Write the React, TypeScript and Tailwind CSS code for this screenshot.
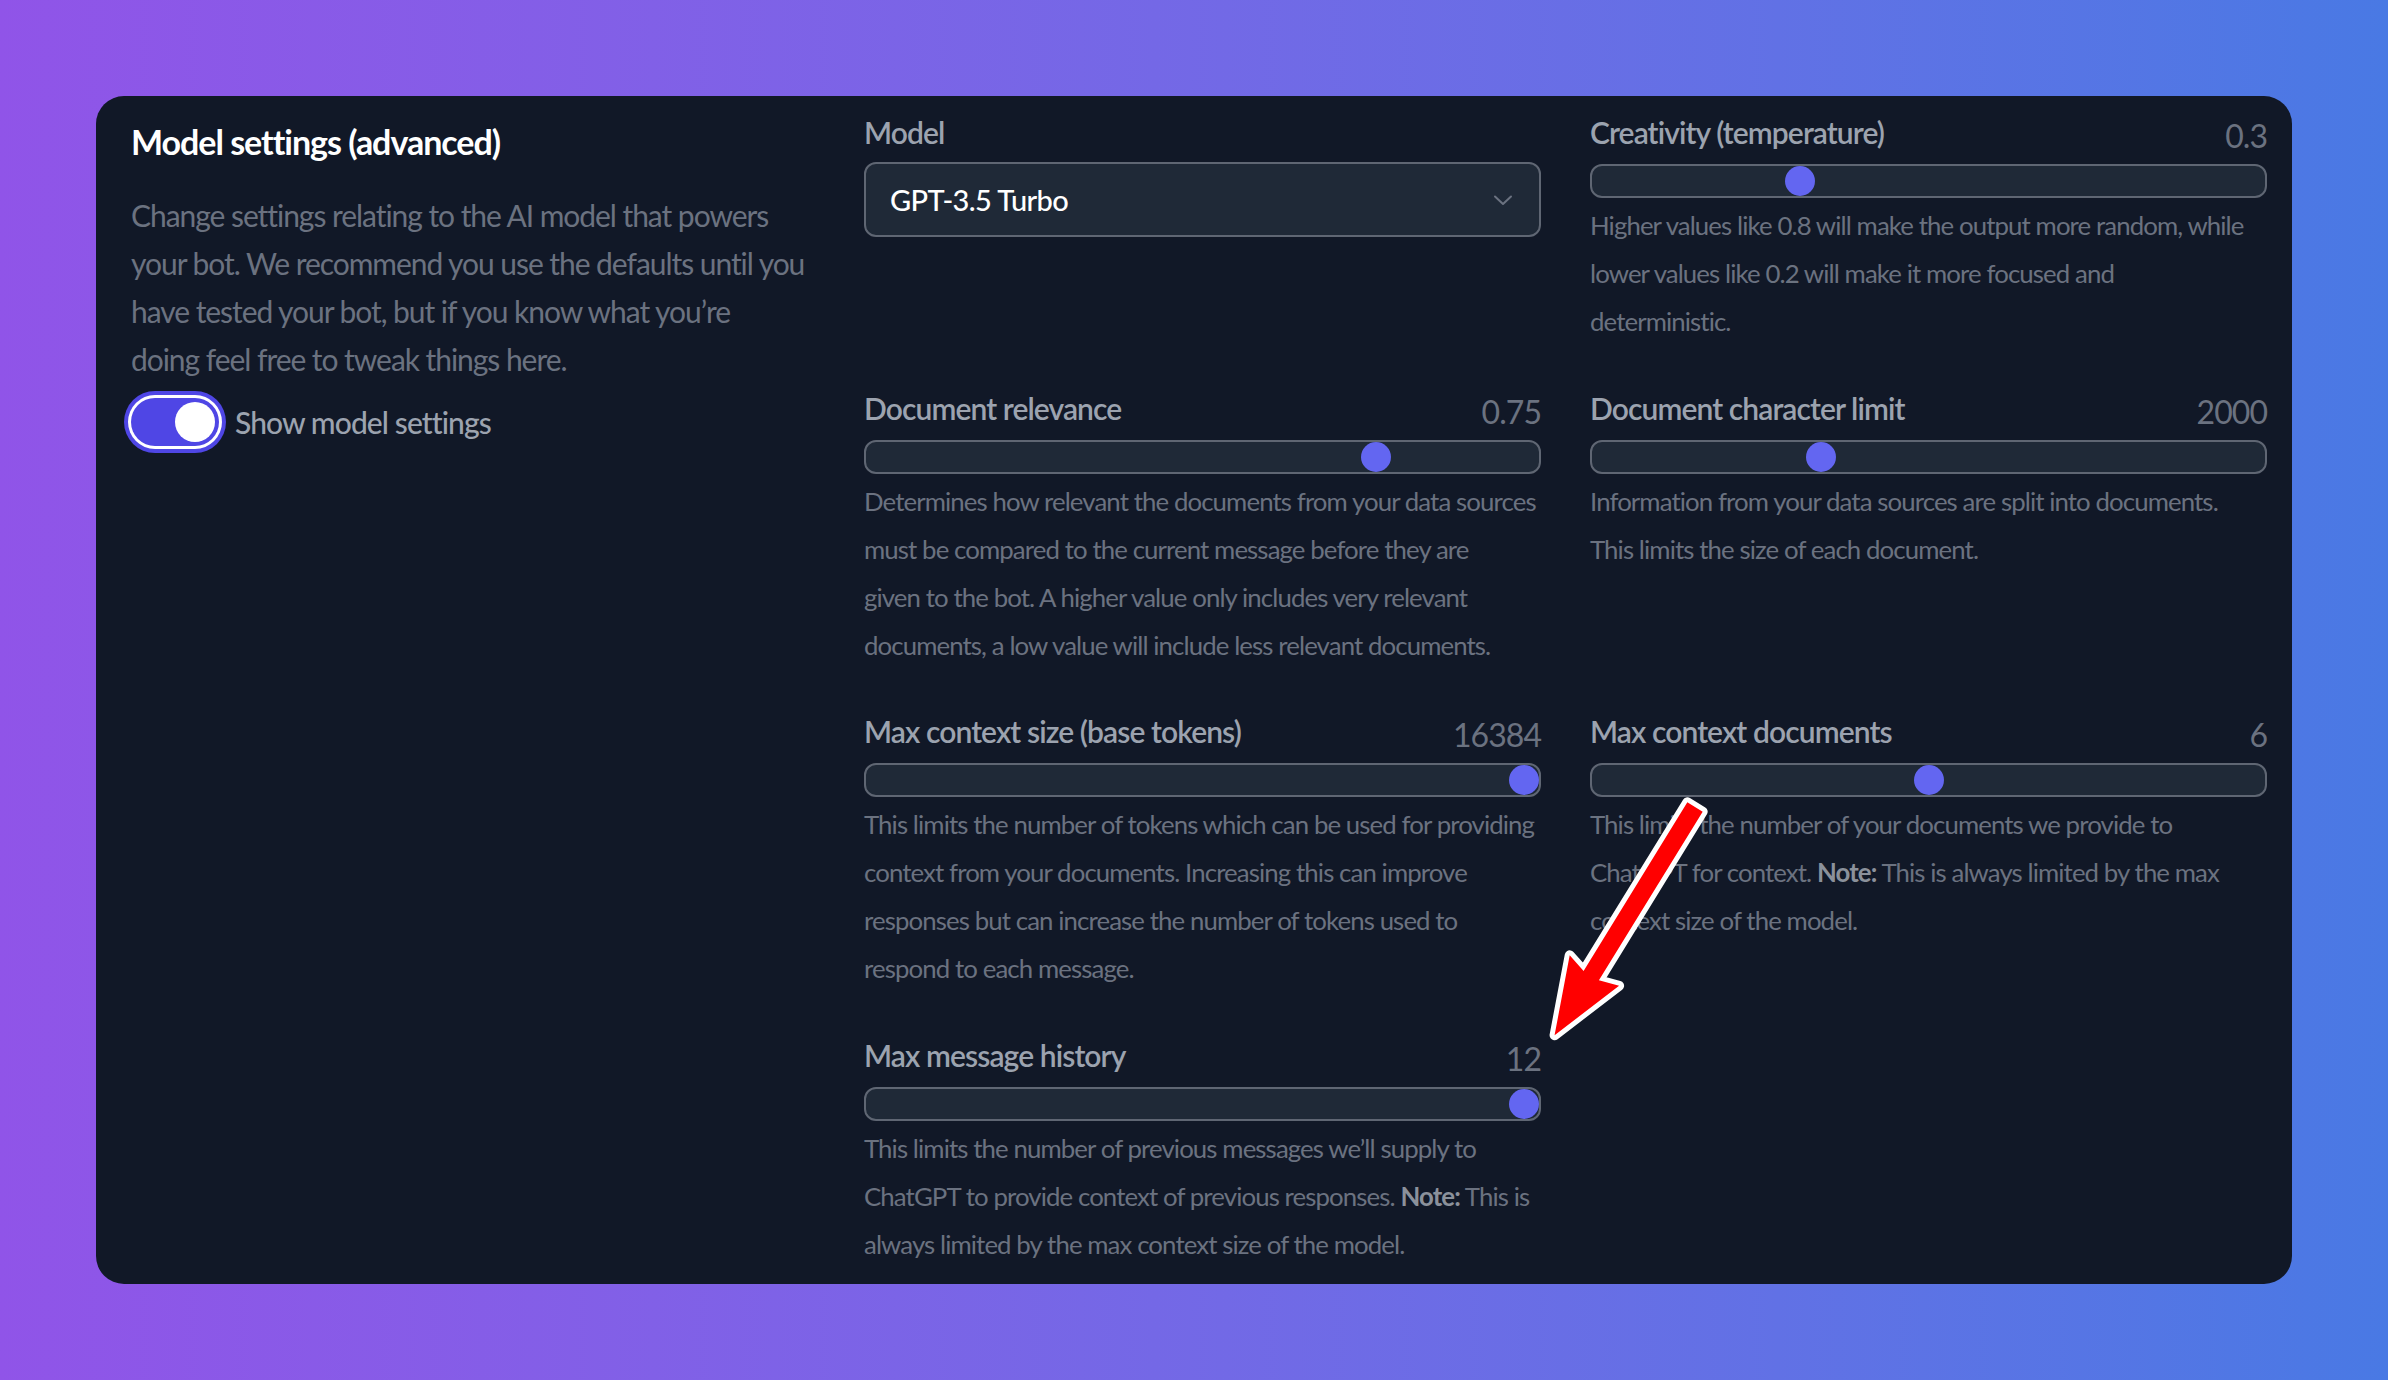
import React from 'react';

interface SliderSettingProps {
  label: string;
  value: string;
  fraction: number;
  children: React.ReactNode;
}

const SliderSetting: React.FC<SliderSettingProps> = ({ label, value, fraction, children }) => {
  return (
    <div className="flex flex-col">
      <div className="flex justify-between">
        <span className="text-[30px] leading-[48px] font-semibold tracking-[-0.03em] text-[#9ca3af]">{label}</span>
        <span className="text-[32px] leading-[56px] tracking-[-0.03em] text-[#6b7280]">{value}</span>
      </div>
      <div className="h-[34px] rounded-[12px] border-2 border-[#5f6673] bg-[#1f2937]">
        <div className="relative h-full">
          <div
            className="absolute top-0 h-[30px] w-[30px] rounded-full bg-[#6366f1]"
            style={{ left: `calc(${fraction} * (100% - 30px))` }}
          />
        </div>
      </div>
      <p className="pt-[3px] text-[25.8px] leading-[48px] tracking-[-0.035em] text-[#6b7280]">{children}</p>
    </div>
  );
};

const Note = () => <span className="font-bold text-[#8b919b]">Note:</span>;

export default function App() {
  return (
    <div
      className="relative min-h-screen w-full bg-gradient-to-r from-[#9054e8] to-[#4979e4] p-[96px]"
      style={{ fontFamily: 'Lato, "Noto Sans", sans-serif' }}
    >
      <div className="flex h-[1188px] overflow-hidden rounded-[28px] bg-[#111827]">
        {/* left column */}
        <div className="w-[768px] shrink-0 pl-[35px] pr-[30px] pt-[18px]">
          <h2 className="text-[34px] leading-[56px] font-bold tracking-[-0.03em] text-white">Model settings (advanced)</h2>
          <p className="mt-[21px] text-[30px] leading-[48px] tracking-[-0.035em] text-[#6b7280]">
            Change settings relating to the AI model that powers
            <br />
            your bot. We recommend you use the defaults until you
            <br />
            have tested your bot, but if you know what you’re
            <br />
            doing feel free to tweak things here.
          </p>
          <div className="mt-[15px] flex items-center">
            <button className="flex h-[48px] w-[88px] shrink-0 justify-end rounded-full bg-[#4f46e5] p-[4px] shadow-[0_0_0_3px_#ffffff,0_0_0_7px_#4f46e5]">
              <span className="h-[40px] w-[40px] rounded-full bg-white" />
            </button>
            <span className="ml-[16px] text-[30px] leading-[48px] font-medium tracking-[-0.03em] text-[#9ca3af]">
              Show model settings
            </span>
          </div>
        </div>

        {/* settings grid */}
        <div className="grid grid-cols-[677px_677px] content-start gap-x-[49px] gap-y-[38.5px] pt-[12px]">
          <div className="flex flex-col">
            <span className="text-[30px] leading-[48px] font-semibold tracking-[-0.03em] text-[#9ca3af]">Model</span>
            <div className="mt-[6px] flex h-[75px] items-center justify-between rounded-[12px] border-2 border-[#5f6673] bg-[#1f2937] pl-[24px] pr-[26px]">
              <span className="text-[29px] font-medium tracking-[-0.02em] text-white">GPT-3.5 Turbo</span>
              <svg className="h-[20px] w-[20px] text-[#6b7280]" viewBox="0 0 20 20" fill="none" stroke="currentColor" strokeWidth={2} strokeLinecap="round" strokeLinejoin="round">
                <path d="M2 6.5l8 7.5 8-7.5" />
              </svg>
            </div>
          </div>

          <SliderSetting label="Creativity (temperature)" value="0.3" fraction={0.3}>
            Higher values like 0.8 will make the output more random, while
            <br />
            lower values like 0.2 will make it more focused and
            <br />
            deterministic.
          </SliderSetting>

          <SliderSetting label="Document relevance" value="0.75" fraction={0.77}>
            Determines how relevant the documents from your data sources
            <br />
            must be compared to the current message before they are
            <br />
            given to the bot. A higher value only includes very relevant
            <br />
            documents, a low value will include less relevant documents.
          </SliderSetting>

          <SliderSetting label="Document character limit" value="2000" fraction={0.333}>
            Information from your data sources are split into documents.
            <br />
            This limits the size of each document.
          </SliderSetting>

          <SliderSetting label="Max context size (base tokens)" value="16384" fraction={1}>
            This limits the number of tokens which can be used for providing
            <br />
            context from your documents. Increasing this can improve
            <br />
            responses but can increase the number of tokens used to
            <br />
            respond to each message.
          </SliderSetting>

          <SliderSetting label="Max context documents" value="6" fraction={0.5}>
            This limits the number of your documents we provide to
            <br />
            ChatGPT for context. <Note /> This is always limited by the max
            <br />
            context size of the model.
          </SliderSetting>

          <SliderSetting label="Max message history" value="12" fraction={1}>
            This limits the number of previous messages we’ll supply to
            <br />
            ChatGPT to provide context of previous responses. <Note /> This is
            <br />
            always limited by the max context size of the model.
          </SliderSetting>
        </div>
      </div>

      {/* annotation arrow */}
      <svg className="pointer-events-none absolute left-0 top-0" width="2388" height="1380" viewBox="0 0 2388 1380">
        <g transform="translate(1695 807) rotate(121.6)">
          <polygon
            points="0,-9 198,-9 192,-29 268,0 192,29 198,9 0,9"
            fill="#ff0000"
            stroke="#ffffff"
            strokeWidth={10}
            strokeLinejoin="round"
            paintOrder="stroke"
          />
        </g>
      </svg>
    </div>
  );
}
